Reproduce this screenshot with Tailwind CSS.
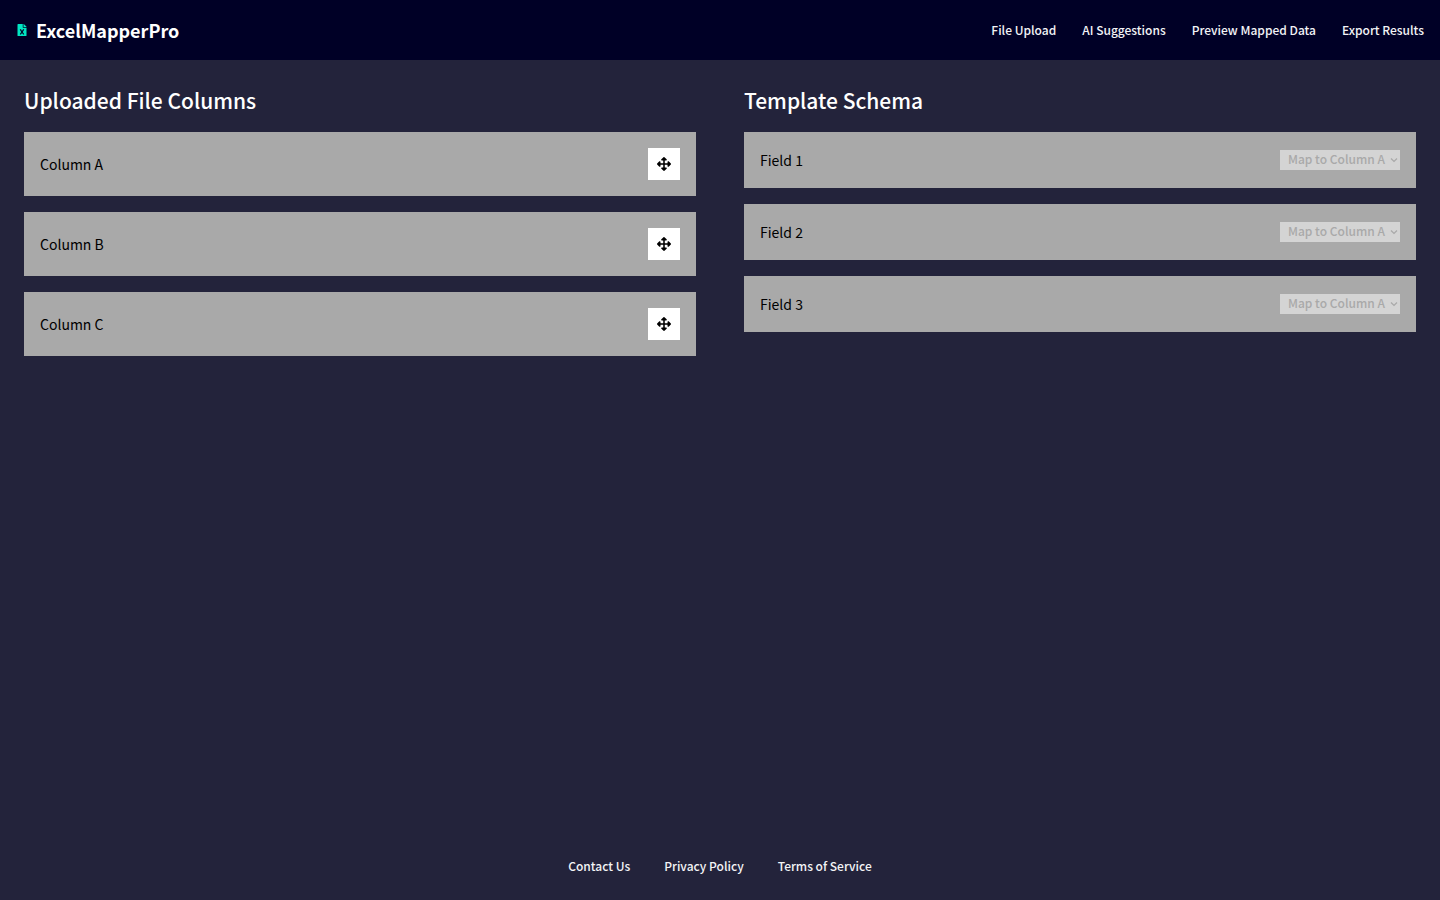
<!DOCTYPE html>
<html lang="en">
<head>
<meta charset="utf-8">
<meta name="viewport" content="width=device-width, initial-scale=1">
<title>ExcelMapperPro</title>
<script src="https://cdn.jsdelivr.net/npm/@tailwindcss/browser@4"></script>
</head>
<body class="flex min-h-screen flex-col bg-[#23233b] font-['Noto_Sans_CJK_SC',sans-serif] text-sm text-white">
<svg class="hidden" aria-hidden="true">
  <symbol id="move" viewBox="0 0 512 512"><path d="M352 426l-80 80a23 23 0 0 1-32 0l-80-80c-15-15-4-41 17-41h51V284H127v51c0 21-26 32-41 17L6 272a24 24 0 0 1 0-34l80-80c15-15 41-4 41 17v53h101V127h-53c-21 0-32-26-17-41l80-80a24 24 0 0 1 34 0l80 80c15 15 4 41-17 41h-51v101h101v-53c0-21 26-32 41-17l80 80a24 24 0 0 1 0 34l-80 80c-15 15-41 4-41-17v-51H284v101h51c21 0 32 26 17 41z"/></symbol>
  <symbol id="chevron" viewBox="0 0 8 8"><path d="M1 2.5 4 5.5 7 2.5" fill="none" stroke="currentColor" stroke-width="1.2"/></symbol>
</svg>
<header class="flex h-15 items-center justify-between bg-[#000026] px-4">
  <a href="#" class="flex items-center gap-2 text-lg font-bold">
    <svg class="h-3 w-3 text-[#00e6c3]" viewBox="0 0 384 512" fill="currentColor" aria-hidden="true"><path d="M224 136V0H24C11 0 0 11 0 24v464c0 13 11 24 24 24h336c13 0 24-11 24-24V160H248c-13 0-24-11-24-24zm60 106-60 94 60 94c5 8 0 18-10 18h-35c-4 0-8-2-10-6-22-41-37-68-37-68-14 32-10 25-37 68-2 4-6 6-10 6h-35c-9 0-15-10-10-18l60-94-60-94c-5-8 1-18 10-18h35c4 0 8 2 10 6 26 49 20 34 37 68 0 0 6-11 37-68 2-4 6-6 10-6h35c10 0 15 10 10 18zM384 122v6H256V0h6c6 0 13 3 17 7l98 98c4 4 7 11 7 17z"/></svg>
    <span>ExcelMapperPro</span>
  </a>
  <nav class="flex gap-[26px] text-xs font-medium text-gray-100">
    <a href="#">File Upload</a>
    <a href="#">AI Suggestions</a>
    <a href="#">Preview Mapped Data</a>
    <a href="#">Export Results</a>
  </nav>
</header>
<main class="grid flex-1 grid-cols-2 content-start gap-12 p-6">
  <section>
    <h2 class="mb-4 text-[21px] leading-8 font-medium">Uploaded File Columns</h2>
    <ul class="flex flex-col gap-4 text-black">
      <li class="flex items-center justify-between bg-[#a9a9a9] p-4"><span>Column A</span><button type="button" aria-label="Move Column A" class="flex size-8 items-center justify-center bg-white"><svg class="size-3.5"><use href="#move"/></svg></button></li>
      <li class="flex items-center justify-between bg-[#a9a9a9] p-4"><span>Column B</span><button type="button" aria-label="Move Column B" class="flex size-8 items-center justify-center bg-white"><svg class="size-3.5"><use href="#move"/></svg></button></li>
      <li class="flex items-center justify-between bg-[#a9a9a9] p-4"><span>Column C</span><button type="button" aria-label="Move Column C" class="flex size-8 items-center justify-center bg-white"><svg class="size-3.5"><use href="#move"/></svg></button></li>
    </ul>
  </section>
  <section>
    <h2 class="mb-4 text-[21px] leading-8 font-medium">Template Schema</h2>
    <ul class="flex flex-col gap-4 text-black">
      <li class="flex items-center justify-between bg-[#a9a9a9] p-4"><label for="f1" class="leading-6">Field 1</label>
        <span class="relative flex text-[#a9a9a9]"><select id="f1" class="h-5 w-30 appearance-none bg-[#d4d4d4] pb-0.5 pl-2 text-xs font-medium"><option>Map to Column A</option><option>Map to Column B</option><option>Map to Column C</option></select><svg class="pointer-events-none absolute top-1.5 right-0.5 size-2"><use href="#chevron"/></svg></span></li>
      <li class="flex items-center justify-between bg-[#a9a9a9] p-4"><label for="f2" class="leading-6">Field 2</label>
        <span class="relative flex text-[#a9a9a9]"><select id="f2" class="h-5 w-30 appearance-none bg-[#d4d4d4] pb-0.5 pl-2 text-xs font-medium"><option>Map to Column A</option><option>Map to Column B</option><option>Map to Column C</option></select><svg class="pointer-events-none absolute top-1.5 right-0.5 size-2"><use href="#chevron"/></svg></span></li>
      <li class="flex items-center justify-between bg-[#a9a9a9] p-4"><label for="f3" class="leading-6">Field 3</label>
        <span class="relative flex text-[#a9a9a9]"><select id="f3" class="h-5 w-30 appearance-none bg-[#d4d4d4] pb-0.5 pl-2 text-xs font-medium"><option>Map to Column A</option><option>Map to Column B</option><option>Map to Column C</option></select><svg class="pointer-events-none absolute top-1.5 right-0.5 size-2"><use href="#chevron"/></svg></span></li>
    </ul>
  </section>
</main>
<footer class="flex justify-center gap-[34px] p-6 text-xs leading-5 font-medium text-gray-100">
  <a href="#">Contact Us</a>
  <a href="#">Privacy Policy</a>
  <a href="#">Terms of Service</a>
</footer>
</body>
</html>
